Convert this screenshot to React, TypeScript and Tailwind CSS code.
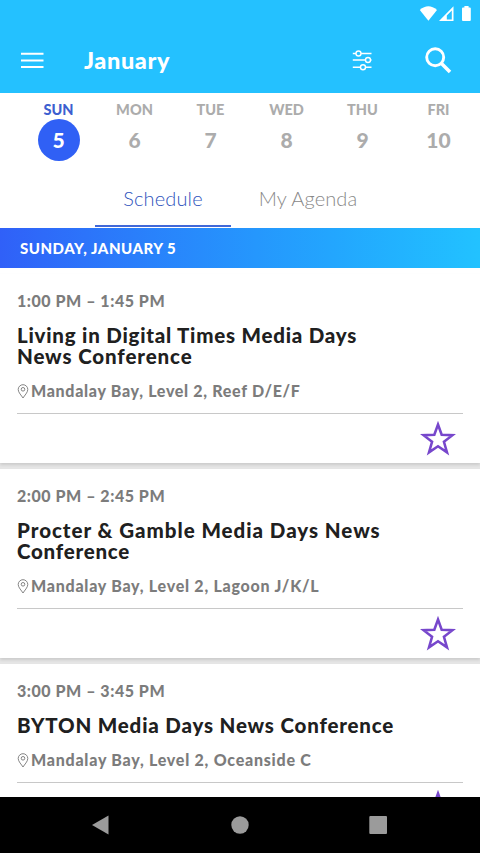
const days = [
  { name: 'SUN', date: 5 },
  { name: 'MON', date: 6 },
  { name: 'TUE', date: 7 },
  { name: 'WED', date: 8 },
  { name: 'THU', date: 9 },
  { name: 'FRI', date: 10 },
];

const sessions = [
  {
    time: '1:00 PM – 1:45 PM',
    lines: [
      { text: 'Living in Digital Times Media Days', tracking: 'tracking-[0.77px]' },
      { text: 'News Conference', tracking: 'tracking-[0.88px]' },
    ],
    place: 'Mandalay Bay, Level 2, Reef D/E/F',
    placeTracking: 'tracking-[0.69px]',
  },
  {
    time: '2:00 PM – 2:45 PM',
    lines: [
      { text: 'Procter & Gamble Media Days News', tracking: 'tracking-[0.97px]' },
      { text: 'Conference', tracking: 'tracking-[0.75px]' },
    ],
    place: 'Mandalay Bay, Level 2, Lagoon J/K/L',
    placeTracking: 'tracking-[0.74px]',
  },
  {
    time: '3:00 PM – 3:45 PM',
    lines: [{ text: 'BYTON Media Days News Conference', tracking: 'tracking-[0.82px]' }],
    place: 'Mandalay Bay, Level 2, Oceanside C',
    placeTracking: 'tracking-[0.75px]',
  },
];

function StatusBar() {
  return (
    <div className="flex h-7 items-center justify-end pr-[9px]">
      <svg className="h-7 w-[54px]" viewBox="0 0 54 28" fill="#fff">
        <path d="M2.8 10.1Q11.3 2.6 20 10.1L11.4 20.7Z" />
        <path fillRule="evenodd" d="M36.5 6.2V21H22ZM34.8 10.400V19.500H29.800V15.400Z" />
        <path d="M47.4 6h4.2v1.6h1.2q1 0 1 1v11.5q0 1-1 1h-6.8q-1 0-1-1V8.600q0-1 1-1h1.400z" />
      </svg>
    </div>
  );
}

function Header() {
  return (
    <header className="h-[93px] bg-[#24c1ff] text-white">
      <StatusBar />
      <div className="flex h-16 items-center pl-[21px] pr-[28px]">
        <svg className="h-[18px] w-[23px]" viewBox="0 0 23 18" stroke="#fff" strokeWidth="1.900">
          <path d="M0 2.800h22.500M0 9.500h22.500M0 16h22.500" />
        </svg>
        <h1 className="ml-10 flex-1 text-[23.5px] font-black leading-7 tracking-[0.6px]">January</h1>
        <svg className="mr-[52px] h-[22px] w-5" viewBox="0 0 20 22" fill="none" stroke="#fff" strokeWidth="1.400">
          <path d="M.8 4.500H4M9 4.500H19.500M.8 11H13.500M18.500 11H19.500M.8 18.300H8.500M13.500 18.300H19.500" />
          <circle cx="6.500" cy="4.500" r="2.500" />
          <circle cx="16" cy="11" r="2.500" />
          <circle cx="11" cy="18.300" r="2.500" />
        </svg>
        <svg className="h-7 w-7" viewBox="0 0 28 28" fill="none" stroke="#fff">
          <circle cx="11.200" cy="11.300" r="8.500" strokeWidth="2.900" />
          <path d="M17 17L26 26" strokeWidth="3.600" />
        </svg>
      </div>
    </header>
  );
}

function Calendar() {
  return (
    <div className="grid grid-cols-[repeat(6,76px)] pl-[20.5px] pt-[9px] font-black text-[#acacac]">
      {days.map((d, i) => (
        <div key={d.name} className="flex flex-col items-center">
          <span className={i === 0 ? 'text-[14.5px] leading-4 text-[#3d5fd0]' : 'text-[14.5px] leading-4'}>{d.name}</span>
          <span
            className={
              i === 0
                ? 'mt-px flex size-[42px] items-center justify-center rounded-full bg-[#3060f5] text-[21px] text-white'
                : 'mt-px flex size-[42px] items-center justify-center text-[21px]'
            }
          >
            {d.date}
          </span>
        </div>
      ))}
    </div>
  );
}

function Tabs() {
  return (
    <div className="flex h-[67px] pb-[1px] pl-[95px] text-[20px] font-light">
      <div className="flex w-[136px] flex-col justify-end border-b-2 border-[#4168d8] pb-[13px] text-center leading-7 tracking-[0.15px] text-[#3055bd]">
        Schedule
      </div>
      <div className="flex w-[154px] flex-col justify-end pb-[15px] text-center leading-7 tracking-[0.1px] text-[#888]">
        My Agenda
      </div>
    </div>
  );
}

function Pin() {
  return (
    <svg className="mr-[2px] h-[15px] w-3" viewBox="0 0 12 15" fill="none" stroke="#777" strokeWidth="0.9">
      <path d="M6 14C4.500 11.500 1.200 8.500 1.200 5.500a4.800 4.800 0 0 1 9.600 0C10.800 8.500 7.500 11.500 6 14Z" />
      <circle cx="6" cy="5.300" r="1.800" />
    </svg>
  );
}

function Star() {
  return (
    <svg className="h-9 w-9" viewBox="-16.200 -17 32.400 32.400" fill="none" stroke="#7747cc" strokeWidth="2.300" strokeMiterlimit="10">
      <path d="M0-13.800L3.300-4.600L13.100-4.250L5.350 1.750L8.100 11.200L0 5.700L-8.100 11.200L-5.350 1.750L-13.100-4.250L-3.300-4.600Z" />
    </svg>
  );
}

function Card({ session }: { session: (typeof sessions)[number] }) {
  return (
    <article className="mb-[6px] shrink-0 bg-white px-[17px] pt-[17px] shadow-[0_2px_3px_rgba(0,0,0,0.12)]">
      <p className="h-[30px] text-base font-black leading-5 tracking-[0.54px] text-[#7c7c7c]">{session.time}</p>
      <div className="pt-1 text-[20.5px] font-black leading-[21px] text-[#202020]">
        {session.lines.map((l) => (
          <p key={l.text} className={l.tracking + ' whitespace-nowrap'}>
            {l.text}
          </p>
        ))}
      </div>
      <div className="mt-3 flex h-6 items-center whitespace-nowrap text-base font-black text-[#7c7c7c]">
        <Pin />
        <span className={session.placeTracking}>{session.place}</span>
      </div>
      <div className="mt-[10px] flex h-[50px] justify-end border-t border-[#c8c8c8] pr-[7px] pt-[7px]">
        <Star />
      </div>
    </article>
  );
}

function NavBar() {
  return (
    <nav className="h-14 bg-black">
      <svg className="h-14 w-full" viewBox="0 0 480 56" fill="#9b9b9b">
        <path d="M92 28L108.500 18.500V37.500Z" />
        <circle cx="240" cy="28" r="8.700" />
        <rect x="369.300" y="19" width="17.700" height="18" rx="1" />
      </svg>
    </nav>
  );
}

export default function App() {
  return (
    <div className="flex h-[853px] w-[480px] flex-col overflow-hidden bg-white font-[Lato,sans-serif]">
      <Header />
      <Calendar />
      <Tabs />
      <div className="flex h-10 shrink-0 items-center bg-linear-to-r from-[#3060f8] to-[#22c2ff] pl-5 text-[15px] font-black tracking-[0.52px] text-white">
        SUNDAY, JANUARY 5
      </div>
      <main className="flex min-h-0 flex-1 flex-col overflow-hidden bg-[#e6e6e6]">
        <div className="h-[6px] shrink-0 bg-white" />
        {sessions.map((s) => (
          <Card key={s.time} session={s} />
        ))}
      </main>
      <NavBar />
    </div>
  );
}
